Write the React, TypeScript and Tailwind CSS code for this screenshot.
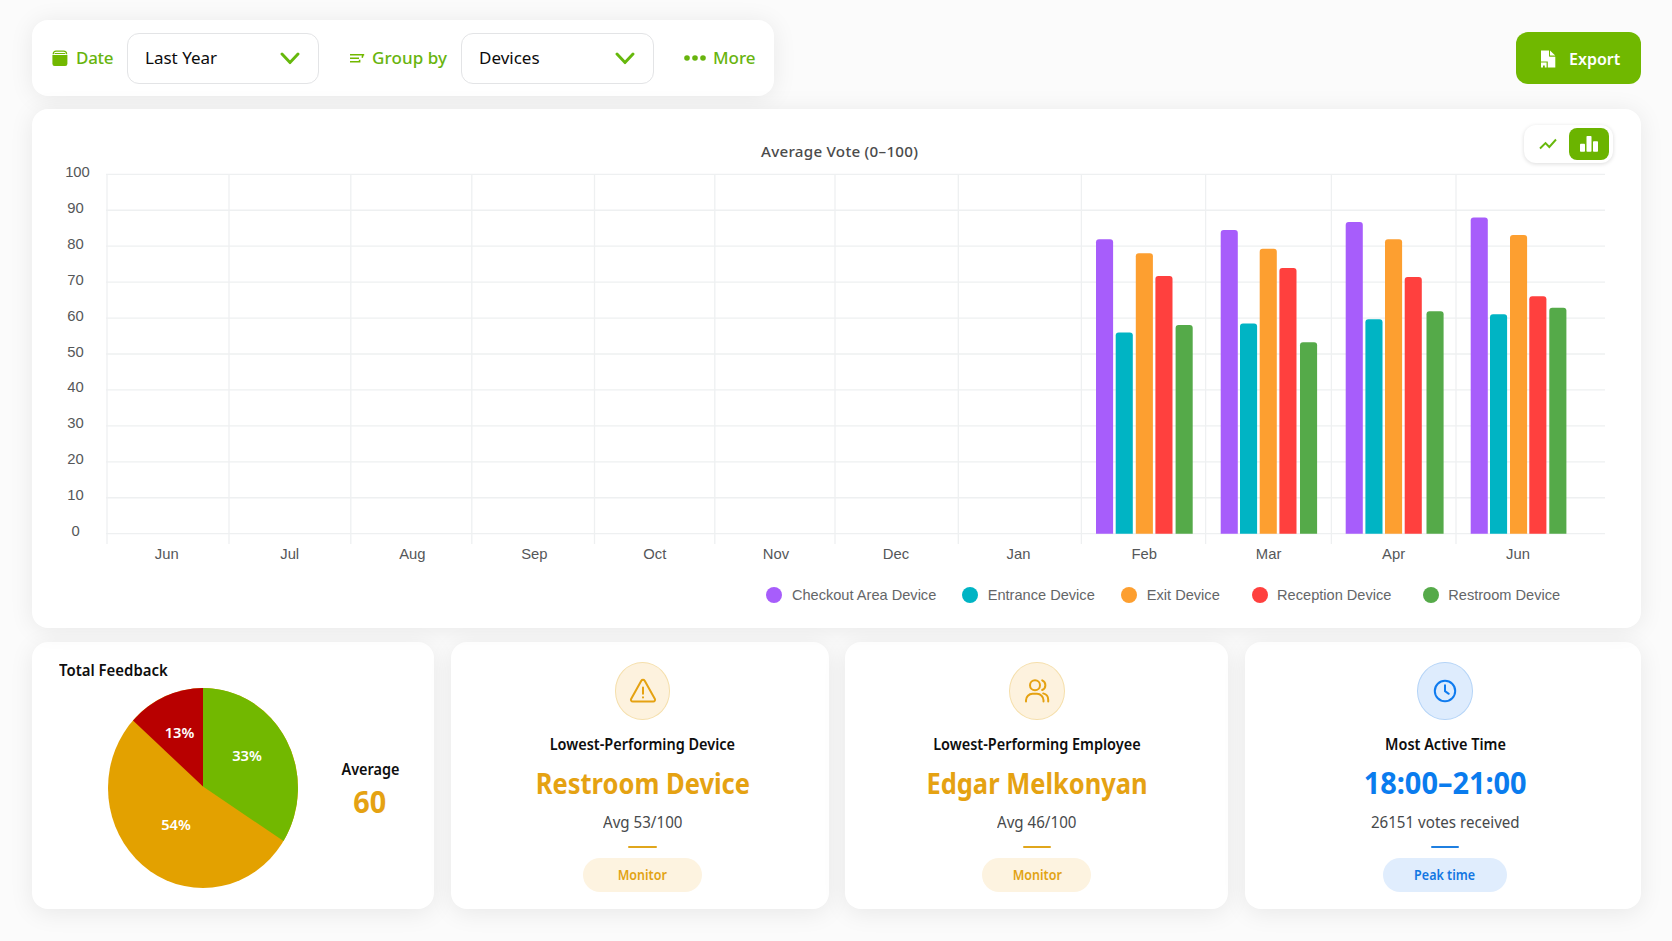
import React from "react";

type Tone = "amber" | "blue";

const SERIES = [
  { name: "Checkout Area Device", color: "#a75dfb", dot: "bg-[#a75dfb]", gap: "mr-[25.9px]" },
  { name: "Entrance Device", color: "#00b4c4", dot: "bg-[#00b4c4]", gap: "mr-[26.5px]" },
  { name: "Exit Device", color: "#fd9f30", dot: "bg-[#fd9f30]", gap: "mr-[31.8px]" },
  { name: "Reception Device", color: "#ff403e", dot: "bg-[#ff403e]", gap: "mr-[31.3px]" },
  { name: "Restroom Device", color: "#55aa49", dot: "bg-[#55aa49]", gap: "" },
];

const MONTHS = [
  { label: "Jun", line: 107, x: 166.7 },
  { label: "Jul", line: 229, x: 289.7 },
  { label: "Aug", line: 350.8, x: 412.3 },
  { label: "Sep", line: 471.8, x: 534.3 },
  { label: "Oct", line: 594.5, x: 654.8 },
  { label: "Nov", line: 714.8, x: 776 },
  { label: "Dec", line: 835, x: 896 },
  { label: "Jan", line: 958.3, x: 1018.5 },
  { label: "Feb", line: 1081.4, x: 1144.2 },
  { label: "Mar", line: 1205.6, x: 1268.6 },
  { label: "Apr", line: 1331.4, x: 1393.6 },
  { label: "Jun", line: 1456, x: 1518 },
];

const BARS = [
  { xs: [1096, 1115.7, 1135.8, 1155.4, 1175.6], tops: [239.3, 332.5, 253.2, 276, 325] },
  { xs: [1220.7, 1240, 1259.7, 1279.4, 1300], tops: [230, 323.5, 248.8, 268, 342.2] },
  { xs: [1345.7, 1365.4, 1385, 1404.7, 1426.5], tops: [222, 319.3, 239.3, 277, 311.2] },
  { xs: [1470.7, 1490, 1510, 1529.3, 1549.3], tops: [217.6, 314.2, 235, 296.2, 307.8] },
];

const BASE = 533.7;
const STEP = 35.94;

function barPath(x: number, top: number) {
  const w = 17.1;
  const r = 3;
  return `M${x} ${BASE}V${top + r}q0 ${-r} ${r} ${-r}H${x + w - r}q${r} 0 ${r} ${r}V${BASE}z`;
}

function CalendarIcon() {
  return (
    <svg width="16" height="17" viewBox="0 0 16 17" fill="none">
      <path d="M1.200 4.200C1.200 2 2.400 1.200 4 1.200h7.600c1.900 0 3 .8 3 3" stroke="#72b800" strokeWidth="1.300" />
      <path d="M2.600 3.500h10.600" stroke="#72b800" strokeWidth="1" />
      <path d="M.4 5h15v8.800a2.200 2.200 0 0 1-2.200 2.200H2.600A2.200 2.200 0 0 1 .4 13.800z" fill="#72b800" />
    </svg>
  );
}

function GroupIcon() {
  return (
    <svg width="15" height="11" viewBox="0 0 15 11" fill="none" stroke="#72b800" strokeWidth="1.600">
      <path d="M0 1.800h14.200M13 1.500l-.8 3.300M0 5.300h9M0 8.800h10.300M9.600 6.800v2.600" />
    </svg>
  );
}

function Chevron() {
  return (
    <svg width="20" height="13" viewBox="0 0 20 13" fill="none">
      <path d="M2 2l8 8.600L18 2" stroke="#66b80c" strokeWidth="2.900" strokeLinecap="round" strokeLinejoin="round" />
    </svg>
  );
}

function ExportIcon() {
  return (
    <svg width="16" height="18" viewBox="0 0 16 18" fill="#fff">
      <path d="M1 .5h8v5.200c0 .6.4 1 1 1h5.300V17.500H7.800v-6H1z" />
      <path d="M10 .6l5.200 5H10.600a.6.6 0 0 1-.6-.6z" />
      <path d="M1 12.600h5.600v4.900H4.800v-2H3v2H1z" />
    </svg>
  );
}

function WarningIcon() {
  return (
    <svg width="28" height="26" viewBox="0 0 28 26" fill="none" stroke="#e5a212" strokeWidth="2" strokeLinecap="round" strokeLinejoin="round">
      <path d="M12.300 2.700a2 2 0 0 1 3.400 0L25.900 20.900a1.900 1.900 0 0 1-1.700 2.700H3.800a1.900 1.900 0 0 1-1.700-2.700z" />
      <path d="M14 9.500v6.200M14 19.300v.1" />
    </svg>
  );
}

function UsersIcon() {
  return (
    <svg width="26" height="26" viewBox="0 0 26 26" fill="none" stroke="#e5a212" strokeWidth="2" strokeLinecap="round">
      <circle cx="11" cy="7.200" r="5" />
      <path d="M2 23.500v-1.200a6.500 6.500 0 0 1 6.500-6.500h4.500a6.500 6.500 0 0 1 6.500 6.500v1.200" />
      <path d="M18.200 2.300a5.300 5.300 0 0 1 0 9.700M19.200 15.400a6.500 6.500 0 0 1 5 6.300v1.800" />
    </svg>
  );
}

function ClockIcon() {
  return (
    <svg width="24" height="24" viewBox="0 0 24 24" fill="none" stroke="#0f7bef" strokeWidth="2" strokeLinecap="round" strokeLinejoin="round">
      <circle cx="12" cy="12" r="10.200" />
      <path d="M12 6.200v6l3.800 2.600" />
    </svg>
  );
}

function Select({ value, width }: { value: string; width: string }) {
  return (
    <div className={`flex h-[51px] items-center justify-between rounded-xl border-[1.5px] border-[#e3e4e6] bg-white pr-[18px] pl-[17px] ${width}`}>
      <span className="text-[17px] leading-6 text-[#0c0c0c]">{value}</span>
      <Chevron />
    </div>
  );
}

function Toolbar() {
  return (
    <header className="flex h-[76px] items-center justify-between">
      <div className="flex h-[76px] w-[742px] items-center rounded-2xl bg-white pl-5 text-[#68b40e] shadow-[0_2px_24px_rgba(0,0,0,0.08)]">
        <CalendarIcon />
        <span className="ml-2 w-[51px] text-[17px] leading-6 font-medium tracking-[-0.3px]">Date</span>
        <Select value="Last Year" width="w-[192px]" />
        <span className="ml-[31px] flex w-[22px]"><GroupIcon /></span>
        <span className="w-[89px] text-[17px] leading-6 font-medium tracking-[0.1px]">Group by</span>
        <Select value="Devices" width="w-[193px]" />
        <svg className="ml-[30px]" width="22" height="6" viewBox="0 0 22 6" fill="#68b40e">
          <circle cx="3" cy="3" r="2.800" />
          <circle cx="11" cy="3" r="2.800" />
          <circle cx="19" cy="3" r="2.800" />
        </svg>
        <span className="ml-[7px] text-[17px] leading-6 font-medium">More</span>
      </div>
      <button className="flex h-[52px] w-[125px] items-center rounded-xl bg-[#70b800] pt-px pl-6 text-white">
        <ExportIcon />
        <span className="ml-[13px] origin-left scale-x-[0.965] text-[16.6px] leading-6 font-semibold">Export</span>
      </button>
    </header>
  );
}

function ChartToggle() {
  return (
    <div className="absolute top-4 right-7 flex h-[38px] w-[89px] items-center justify-between rounded-xl bg-white pr-1 pl-[14px] shadow-[0_1px_4px_rgba(0,0,0,0.14)]">
      <svg width="20" height="14" viewBox="0 0 20 14" fill="none" stroke="#68b80c" strokeWidth="1.900">
        <path d="M2 11.500L7.500 6l3.800 4L18 2.500" />
      </svg>
      <div className="flex h-8 w-10 items-center justify-center rounded-lg bg-[#6bb400]">
        <svg width="18" height="16" viewBox="0 0 18 16" fill="#fff">
          <rect x="0" y="7.800" width="5" height="8" rx=".8" />
          <rect x="6.500" y="0" width="5" height="15.800" rx=".8" />
          <rect x="13" y="5.200" width="5" height="10.600" rx=".8" />
        </svg>
      </div>
    </div>
  );
}

function Chart() {
  return (
    <section className="relative mt-[13px] flex h-[519px] flex-col rounded-2xl bg-white shadow-[0_2px_24px_rgba(0,0,0,0.08)]">
      <h2 className="mt-8 ml-[729px] text-[15.2px] leading-5 font-medium tracking-[0.25px] text-[#4b4b4b]">Average Vote (0–100)</h2>
      <svg className="font-['Liberation_Sans',Arial,sans-serif]" width="1609" height="415" viewBox="32 161 1609 415">
        <g stroke="#eef0f1" strokeWidth="1.300">
          {Array.from({ length: 11 }, (_, i) => (
            <line key={i} x1="106" x2="1605" y1={BASE - i * STEP} y2={BASE - i * STEP} />
          ))}
          {MONTHS.map((m) => (
            <line key={m.line} x1={m.line} x2={m.line} y1="174" y2="544" />
          ))}
        </g>
        <g fill="#555759" fontSize="14.800" textAnchor="middle">
          {Array.from({ length: 11 }, (_, i) => (
            <text key={i} x={i === 10 ? 77.5 : 75.6} y={535.8 - i * 35.85}>{i * 10}</text>
          ))}
          {MONTHS.map((m) => (
            <text key={m.line} x={m.x} y="559.300">{m.label}</text>
          ))}
        </g>
        {BARS.map((group) =>
          group.xs.map((x, i) => <path key={x} d={barPath(x, group.tops[i])} fill={SERIES[i].color} />)
        )}
      </svg>
      <div className="ml-[734.4px] flex h-[38px] items-center font-['Liberation_Sans',Arial,sans-serif]">
        {SERIES.map((s) => (
          <div key={s.name} className={`flex items-center ${s.gap}`}>
            <span className={`size-4 rounded-full ${s.dot}`} />
            <span className="ml-[9.5px] text-[14.6px] leading-5 text-[#646668]">{s.name}</span>
          </div>
        ))}
      </div>
      <ChartToggle />
    </section>
  );
}

const SLICES = [
  { label: "33%", x: 247, y: 760.8 },
  { label: "13%", x: 179.5, y: 738.4 },
  { label: "54%", x: 176, y: 829.8 },
];

function FeedbackCard() {
  return (
    <section className="flex h-[267px] w-[402px] flex-col rounded-2xl bg-white shadow-[0_4px_24px_rgba(0,0,0,0.08)]">
      <h3 className="mt-[19px] ml-[27px] h-5 origin-left scale-x-[0.97] text-[15.4px] leading-5 font-semibold text-[#0e0e0e]">Total Feedback</h3>
      <div className="mt-[7px] flex">
        <svg className="ml-[76px]" width="190" height="200" viewBox="108 688 190 200">
          <ellipse cx="203" cy="788" rx="95" ry="100" fill="#e3a100" />
          <path d="M203 786.500V688A95 100 0 0 1 283.500 841z" fill="#72b800" />
          <path d="M203 786.500L133 720.500A95 100 0 0 1 203 688z" fill="#b80000" />
          <g fill="#fff" fontSize="15" fontWeight="600" textAnchor="middle">
            {SLICES.map((s) => (
              <text key={s.label} transform={`translate(${s.x} ${s.y}) scale(0.98 1)`}>{s.label}</text>
            ))}
          </g>
        </svg>
        <div className="mt-[71px] ml-3 flex w-[120px] flex-col items-center">
          <span className="scale-x-[0.95] text-[15.2px] leading-5 font-semibold text-[#0e0e0e]">Average</span>
          <span className="mt-1 scale-x-[0.93] text-[31px] leading-9 font-bold text-[#e5a212]">60</span>
        </div>
      </div>
    </section>
  );
}

const TONES: Record<Tone, { circle: string; text: string; line: string; pill: string }> = {
  amber: {
    circle: "border-[#f5dfac] bg-[#fdf2de]",
    text: "text-[#e5a212]",
    line: "bg-[#e0a61c]",
    pill: "bg-[#fdf3e0] text-[#e2a314]",
  },
  blue: {
    circle: "border-[#b5d4f7] bg-[#deecfd]",
    text: "text-[#0a7cee]",
    line: "bg-[#1f7fe0]",
    pill: "bg-[#e0edfd] text-[#1377e2]",
  },
};

interface StatProps {
  tone: Tone;
  icon: React.ReactNode;
  title: string;
  value: string;
  note: string;
  tag: string;
  width: string;
  pillWidth: string;
  valueClass: string;
}

function StatCard({ tone, icon, title, value, note, tag, width, pillWidth, valueClass }: StatProps) {
  const t = TONES[tone];
  return (
    <section className={`flex h-[267px] flex-col items-center rounded-2xl bg-white pt-5 shadow-[0_4px_24px_rgba(0,0,0,0.08)] ${width}`}>
      <div className={`flex h-[57.5px] w-[55.5px] items-center justify-center rounded-[50%] border ${t.circle}`}>{icon}</div>
      <h3 className="mt-[14px] scale-x-[0.952] text-[15.2px] leading-5 font-semibold text-[#0e0e0e]">{title}</h3>
      <p className={`mt-[11px] leading-9 font-bold ${valueClass} ${t.text}`}>{value}</p>
      <p className="mt-[11px] scale-x-[0.975] text-[15.5px] leading-5 text-[#47494b]">{note}</p>
      <span className={`mt-[14px] h-[2.5px] w-[28.5px] rounded-full ${t.line}`} />
      <span className={`mt-[10px] flex h-[33.5px] items-center justify-center rounded-full pt-px text-[13.4px] font-semibold ${pillWidth} ${t.pill}`}>
        <span className="scale-x-[0.935]">{tag}</span>
      </span>
    </section>
  );
}

export default function App() {
  return (
    <main className="h-[941px] w-[1672px] overflow-hidden bg-[#fbfbfb] px-8 pt-5 font-['Noto_Sans','Open_Sans',sans-serif]">
      <div className="flex w-[1609px] flex-col">
        <Toolbar />
        <Chart />
        <div className="mt-[14px] flex justify-between">
          <FeedbackCard />
          <StatCard tone="amber" icon={<WarningIcon />} title="Lowest-Performing Device" value="Restroom Device" note="Avg 53/100" tag="Monitor" width="w-[378px] pl-[6px]" pillWidth="w-[119px]" valueClass="text-[28.8px] scale-x-[0.887]" />
          <StatCard tone="amber" icon={<UsersIcon />} title="Lowest-Performing Employee" value="Edgar Melkonyan" note="Avg 46/100" tag="Monitor" width="w-[383px]" pillWidth="w-[109px]" valueClass="text-[28.8px] scale-x-[0.885]" />
          <StatCard tone="blue" icon={<ClockIcon />} title="Most Active Time" value="18:00–21:00" note="26151 votes received" tag="Peak time" width="w-[396px] pl-1" pillWidth="w-[124px]" valueClass="text-[29.5px] scale-x-[0.98]" />
        </div>
      </div>
    </main>
  );
}
